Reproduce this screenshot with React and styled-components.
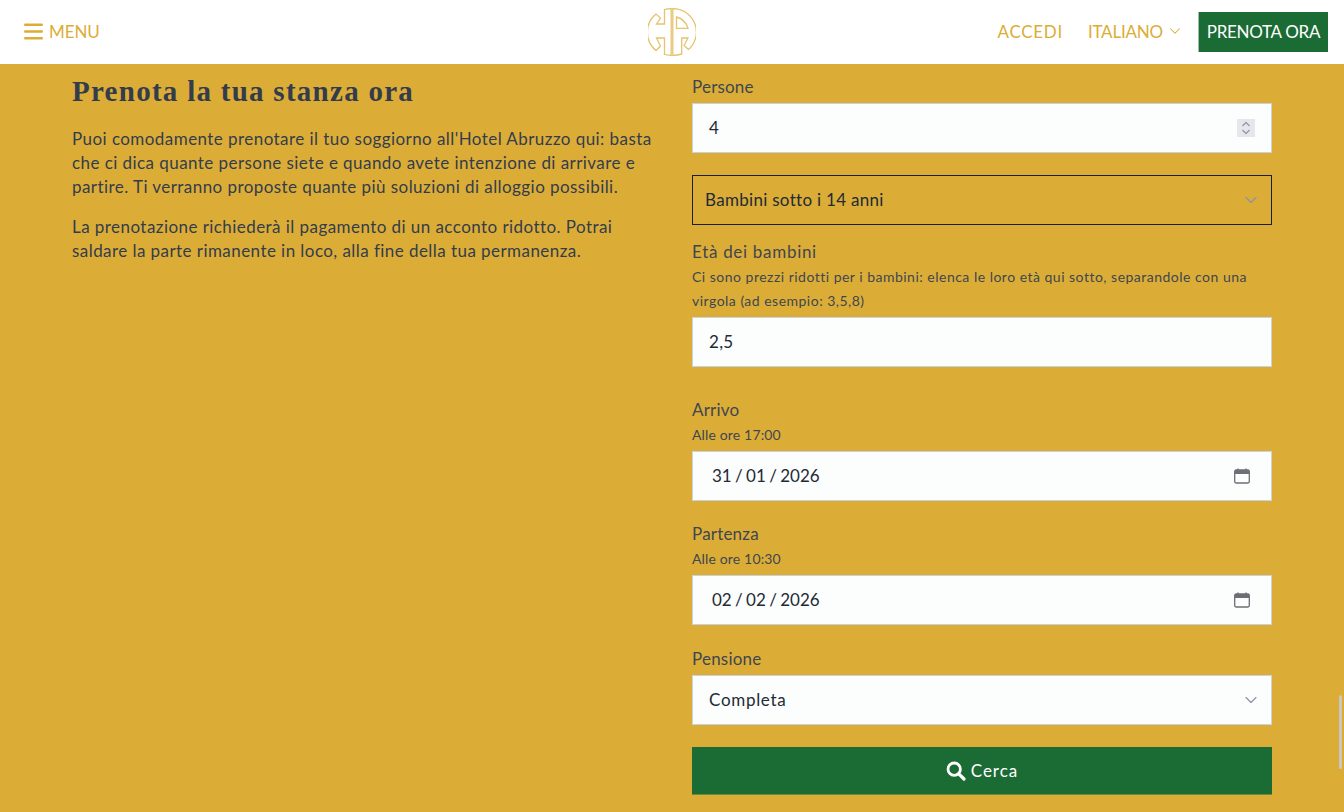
import React from "react";
import styled, { createGlobalStyle } from "styled-components";
import { ChevronDown } from "lucide-react";

const gold = "#dbad37";
const green = "#1a6b34";

const Global = createGlobalStyle`
  html, body { margin: 0; padding: 0; height: 100%; overflow: hidden; background: ${gold}; }
  body { font-family: Lato, "Open Sans", Arial, sans-serif; color: #343c4c; }
  * { box-sizing: border-box; }
`;

const Page = styled.div`
  position: relative;
  height: 812px;
  overflow: hidden;
`;
const Header = styled.header`
  height: 64px;
  background: #fff;
  display: grid;
  grid-template-columns: 1fr auto 1fr;
  align-items: center;
  padding: 0 16px;
`;
const MenuButton = styled.div`
  display: flex;
  align-items: center;
  gap: 6px;
  margin: -2px 0 0 8px;
  color: ${gold};
  font-size: 17px;
  letter-spacing: -0.1px;
`;
const Nav = styled.nav`
  display: flex;
  align-items: center;
  justify-content: flex-end;
  color: ${gold};
  font-size: 17px;
`;
const NavLink = styled.span`
  display: flex;
  align-items: center;
  gap: 3px;
  margin: -2px ${p => p.$gap}px 0 0;
  letter-spacing: ${p => p.$ls}px;
`;
const BookButton = styled.span`
  background: ${green};
  color: #fff;
  height: 40px;
  width: 130px;
  padding-bottom: 2px;
  display: flex;
  align-items: center;
  justify-content: center;
  font-size: 17px;
  letter-spacing: -0.3px;
  border-left: 1px solid #9dbba6;
`;
const Main = styled.main`
  display: grid;
  grid-template-columns: 580px 580px;
  column-gap: 40px;
  padding: 0 72px;
`;
const Intro = styled.section`
  padding-top: 9px;
`;
const Title = styled.h1`
  margin: 0 0 18px;
  font: bold 29px/36px "Liberation Serif", serif;
  letter-spacing: 1.27px;
  color: #343c4c;
`;
const Para = styled.p`
  margin: 0 0 16px;
  font-size: 17px;
  line-height: 24px;
  letter-spacing: 0.44px;
  color: #343c4c;
`;
const Form = styled.form`
  padding-top: 11px;
  display: flex;
  flex-direction: column;
`;
const Group = styled.div`
  margin-bottom: ${p => p.$after}px;
`;
const Label = styled.div`
  font-size: 17px;
  line-height: 24px;
  letter-spacing: ${p => p.$ls ?? 0.2}px;
  margin-bottom: 1px;
  color: #3f4650;
`;
const Help = styled.div`
  font-size: 14px;
  line-height: 24px;
  letter-spacing: ${p => p.$ls ?? 0.15}px;
  color: #3f4650;
`;
const Control = styled.div`
  height: 50px;
  margin-top: ${p => p.$mt ?? 4}px;
  display: flex;
  align-items: center;
  justify-content: space-between;
  padding: 0 ${p => p.$pr ?? 16}px 0 ${p => p.$pl ?? 16}px;
  font-size: 17px;
  letter-spacing: ${p => p.$ls ?? 0.3}px;
  color: #222a36;
  background: ${p => (p.$ghost ? "transparent" : "#fcfdfd")};
  border: 1px solid ${p => (p.$ghost ? "#1a1f2b" : "#c9d3e0")};
`;
const Value = styled.span`
  padding-bottom: 2px;
`;
const Spinner = styled.span`
  width: 18px;
  height: 18px;
  background: #e6e6ec;
  display: flex;
  align-items: center;
  justify-content: center;
`;
const DateValue = styled.span`
  padding-bottom: 2px;
  word-spacing: -1px;
  letter-spacing: 0;
`;
const SearchButton = styled.div`
  height: 48px;
  background: ${green};
  color: #fff;
  font-size: 17px;
  letter-spacing: 1px;
  display: flex;
  align-items: center;
  justify-content: center;
  gap: 5px;
  border-bottom: 1px solid #6b8b3a;
`;
const Thumb = styled.div`
  position: absolute;
  right: 2px;
  top: 695px;
  width: 3px;
  height: 74px;
  border-radius: 2px;
  background: #c9c7c0;
`;

const Burger = () => (
  <svg width="19" height="17" viewBox="0 0 19 17" fill="none" stroke={gold} strokeWidth="2.4" strokeLinecap="round">
    <path d="M1.2 1.7H17.8M1.2 8.5H17.8M1.2 15.3H17.8" />
  </svg>
);
const Logo = () => (
  <svg width="48" height="48" viewBox="0 0 48 48" fill="none" stroke="#e6c36f" strokeWidth="1.3">
    <path d="M23.2 .6V47.4Q19.5 47.2 16.5 46.4V30H8.5L12.5 38L8 42.5A23.6 23.6 0 0 1 8 6L12.5 10L8.5 16H16.5V1.6Q19.5 .8 23.2 .6Z" />
    <path d="M24.8 .6A23.4 23.4 0 0 1 40.5 41.5L36 37.5L40 30H33.7V46Q29 47.2 24.8 47.4Z" />
    <path d="M28.5 20.3V9Q37 11 40 20.3Z" />
  </svg>
);
const Spin = () => (
  <svg width="10" height="14" viewBox="0 0 10 14" fill="none" stroke="#9a9aa6" strokeWidth="1.4">
    <path d="M1.5 5 5 1.5 8.5 5M1.5 9 5 12.5 8.5 9" />
  </svg>
);
const Calendar = () => (
  <svg width="16" height="16" viewBox="0 0 16 16" fill="none">
    <rect x=".7" y="2" width="14.6" height="13" rx="1.4" stroke="#6b6f76" strokeWidth="1.3" />
    <path d="M.7 3.4A1.4 1.4 0 0 1 2 2h12a1.4 1.4 0 0 1 1.3 1.4V6H.7Z" fill="#6b6f76" />
    <path d="M4 .5V3M12 .5V3" stroke="#6b6f76" strokeWidth="1.3" />
  </svg>
);
const Search = () => (
  <svg width="20" height="20" viewBox="0 0 20 20" fill="none" stroke="#fff">
    <circle cx="8.2" cy="8.2" r="6.2" strokeWidth="2.8" />
    <path d="M12.8 12.8 18 18" strokeWidth="3.2" strokeLinecap="round" />
  </svg>
);
const Chevron = ({ color = "#8a93a6", size = 20 }) => <ChevronDown size={size} color={color} strokeWidth={1.4} />;

export default function App() {
  return (
    <Page>
      <Global />
      <Header>
        <MenuButton><Burger />MENU</MenuButton>
        <Logo />
        <Nav>
          <NavLink $gap={25} $ls={0.7}>ACCEDI</NavLink>
          <NavLink $gap={14} $ls={-0.2}>ITALIANO <Chevron color={gold} size={18} /></NavLink>
          <BookButton>PRENOTA ORA</BookButton>
        </Nav>
      </Header>
      <Main>
        <Intro>
          <Title>Prenota la tua stanza ora</Title>
          <Para>Puoi comodamente prenotare il tuo soggiorno all'Hotel Abruzzo qui: basta che ci dica quante persone siete e quando avete intenzione di arrivare e partire. Ti verranno proposte quante più soluzioni di alloggio possibili.</Para>
          <Para>La prenotazione richiederà il pagamento di un acconto ridotto. Potrai saldare la parte rimanente in loco, alla fine della tua permanenza.</Para>
        </Intro>
        <Form>
          <Group $after={22}>
            <Label>Persone</Label>
            <Control><Value>4</Value><Spinner><Spin /></Spinner></Control>
          </Group>
          <Group $after={15}>
            <Control $ghost $mt={0} $pl={12} $pr={10}><Value>Bambini sotto i 14 anni</Value><Chevron /></Control>
          </Group>
          <Group $after={31}>
            <Label $ls={0.7}>Età dei bambini</Label>
            <Help $ls={0.49}>Ci sono prezzi ridotti per i bambini: elenca le loro età qui sotto, separandole con una virgola (ad esempio: 3,5,8)</Help>
            <Control><Value>2,5</Value></Control>
          </Group>
          <Group $after={21}>
            <Label>Arrivo</Label>
            <Help>Alle ore 17:00</Help>
            <Control $pl={19} $pr={21}><DateValue>31 / 01 / 2026</DateValue><Calendar /></Control>
          </Group>
          <Group $after={22}>
            <Label>Partenza</Label>
            <Help>Alle ore 10:30</Help>
            <Control $pl={19} $pr={21}><DateValue>02 / 02 / 2026</DateValue><Calendar /></Control>
          </Group>
          <Group $after={22}>
            <Label>Pensione</Label>
            <Control $ls={0.7} $pr={10}><Value>Completa</Value><Chevron /></Control>
          </Group>
          <SearchButton><Search />Cerca</SearchButton>
        </Form>
      </Main>
      <Thumb />
    </Page>
  );
}
